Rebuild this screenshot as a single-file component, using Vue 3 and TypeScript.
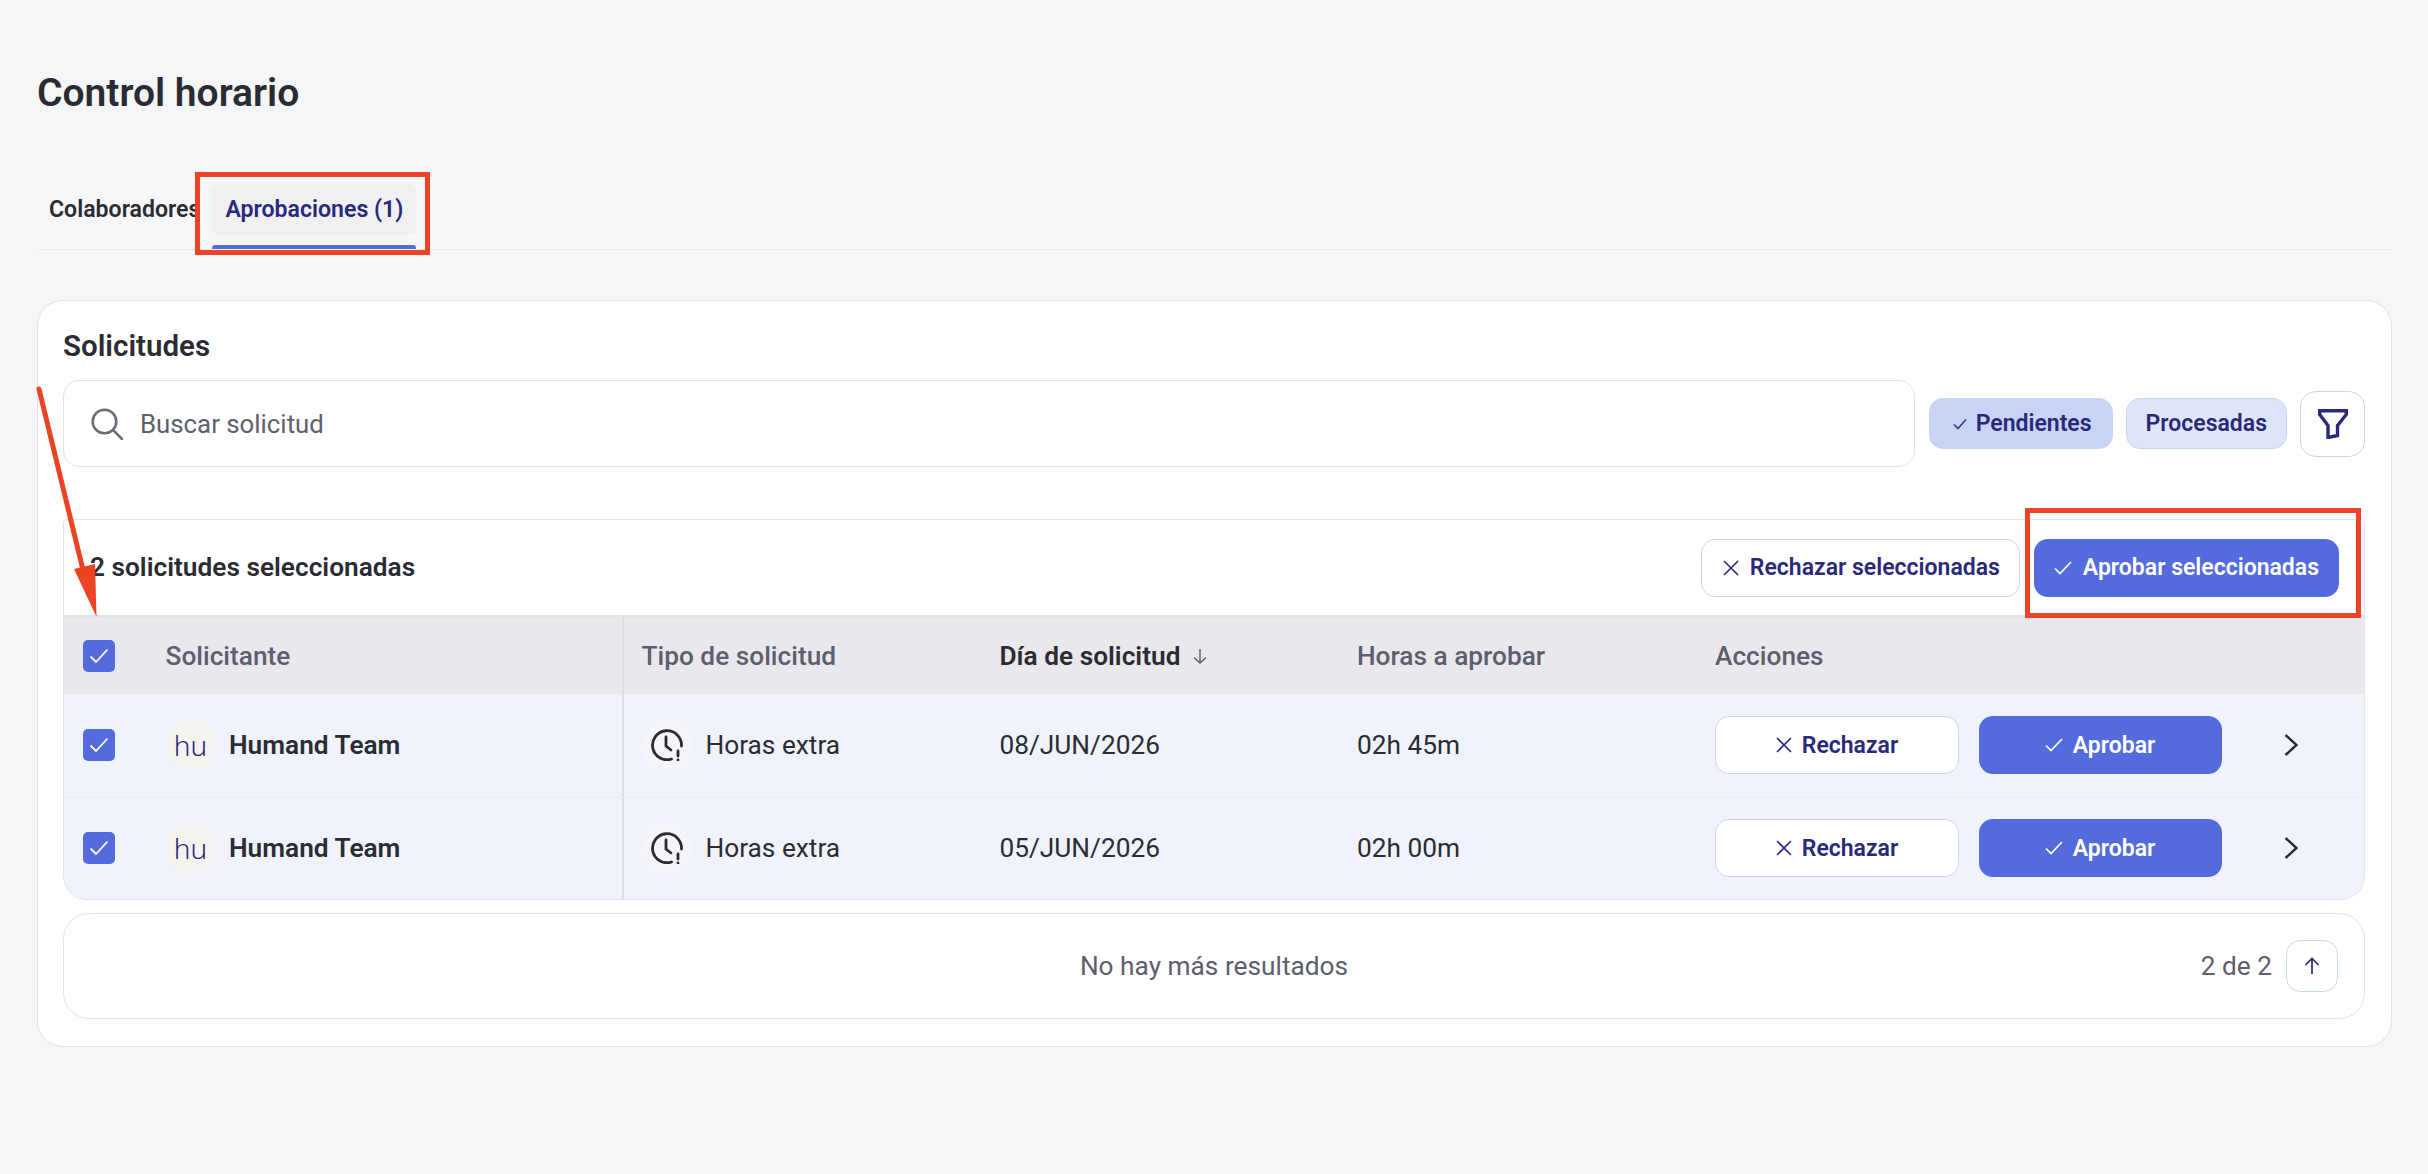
<template>
  <div class="page">
    <h1 class="title">Control horario</h1>

    <!-- tabs -->
    <div class="tabs">
      <div class="tab">Colaboradores</div>
      <div class="tab active">
        <span class="tab-label">Aprobaciones (1)</span>
        <span class="mark mark-tab"></span>
      </div>
    </div>

    <div class="card">
      <h2 class="card-title">Solicitudes</h2>

      <!-- buscador y filtros -->
      <div class="search-row">
        <div class="search">
          <svg class="search-icon" viewBox="0 0 32 32" fill="none" stroke="#6c6c78" stroke-width="2.6" stroke-linecap="round">
            <circle cx="13.5" cy="13.5" r="11.8" />
            <path d="M22.2 22.2 31 31" />
          </svg>
          <span class="placeholder">Buscar solicitud</span>
        </div>
        <div class="chip chip-on">
          <svg class="chip-check" viewBox="0 0 14 14" fill="none" stroke="#29297a" stroke-width="1.4"><path d="m1 7.5 4 4 8-9" /></svg>
          Pendientes
        </div>
        <div class="chip">Procesadas</div>
        <button class="filter-btn">
          <svg viewBox="0 0 30 30" width="30" height="30" fill="none" stroke="#29297a" stroke-width="3.4"><path d="M1.700 1.700h26.600v3.800L19.500 16.500v10l-9.500 2V16.500L1.700 5.500z" /></svg>
        </button>
      </div>

      <div class="table">
        <div class="toolbar">
          <span class="selected-count">2 solicitudes seleccionadas</span>
          <div class="toolbar-actions">
            <button class="btn btn-outline btn-wide">
              <svg class="ico-x" viewBox="0 0 16 16" fill="none" stroke="#29297a" stroke-width="1.6"><path d="m1 1 14 14M15 1 1 15" /></svg>
              Rechazar seleccionadas
            </button>
            <div class="approve-wrap">
              <button class="btn btn-primary btn-wide">
                <svg class="ico-check" viewBox="0 0 18 14" fill="none" stroke="#fff" stroke-width="1.7"><path d="m1 7.500 5 5L17 1" /></svg>
                Aprobar seleccionadas
              </button>
              <span class="mark mark-approve"></span>
            </div>
          </div>
        </div>

        <div class="grid-row head">
          <div class="cell"><span class="checkbox"><svg viewBox="0 0 20 16" fill="none" stroke="#fff" stroke-width="1.800"><path d="m1.500 8.500 5.500 5.500L18.500 1.500" /></svg></span></div>
          <div class="cell">Solicitante</div>
          <div class="cell pad divided">Tipo de solicitud</div>
          <div class="cell sorted">
            Día de solicitud
            <svg class="sort-arrow" viewBox="0 0 16 16" fill="none" stroke="#5e5e6e" stroke-width="1.400"><path d="M8 1v14M2 9.500 8 15l6-5.500" /></svg>
          </div>
          <div class="cell">Horas a aprobar</div>
          <div class="cell">Acciones</div>
        </div>

        <div v-for="item in solicitudes" :key="item.fecha" class="grid-row body">
          <div class="cell"><span class="checkbox"><svg viewBox="0 0 20 16" fill="none" stroke="#fff" stroke-width="1.800"><path d="m1.500 8.500 5.500 5.500L18.500 1.500" /></svg></span></div>
          <div class="cell person">
            <span class="avatar">hu</span>
            <span class="person-name">{{ item.nombre }}</span>
          </div>
          <div class="cell pad divided kind">
            <span class="kind-badge">
              <svg viewBox="0 0 32 32" width="32" height="32" fill="none" stroke="#2b2c33" stroke-width="2.800" stroke-linecap="round">
                <path d="M20.500 30A14.500 14.500 0 1 1 30.500 17" />
                <path d="M15 8v9l5 4" />
                <path d="M27 22v5" />
                <path d="M27 31v.1" />
              </svg>
            </span>
            {{ item.tipo }}
          </div>
          <div class="cell">{{ item.fecha }}</div>
          <div class="cell">{{ item.horas }}</div>
          <div class="cell actions">
            <button class="btn btn-outline btn-row btn-reject">
              <svg class="ico-x" viewBox="0 0 16 16" fill="none" stroke="#29297a" stroke-width="1.600"><path d="m1 1 14 14M15 1 1 15" /></svg>
              Rechazar
            </button>
            <button class="btn btn-primary btn-row">
              <svg class="ico-check" viewBox="0 0 18 14" fill="none" stroke="#fff" stroke-width="1.700"><path d="m1 7.500 5 5L17 1" /></svg>
              Aprobar
            </button>
            <svg class="chevron" viewBox="0 0 14 22" fill="none" stroke="#2b2c33" stroke-width="2.400"><path d="m1.500 1 11 10-11 10" /></svg>
          </div>
        </div>
      </div>

      <div class="footer">
        <span class="no-more">No hay más resultados</span>
        <div class="pager">
          <span>2 de 2</span>
          <button class="up-btn">
            <svg viewBox="0 0 16 18" width="16" height="18" fill="none" stroke="#29297a" stroke-width="1.700"><path d="M8 17V1.500M1.500 8 8 1.500 14.500 8" /></svg>
          </button>
        </div>
      </div>
    </div>

    <!-- flecha de anotación -->
    <svg class="arrow" viewBox="0 0 2428 1174" width="2428" height="1174">
      <path d="M39 389 83 570" stroke="#ed4325" stroke-width="5" stroke-linecap="round" />
      <path d="M74 569 95 564 96.500 617z" fill="#ed4325" />
    </svg>
  </div>
</template>

<script setup lang="ts">
interface Solicitud {
  nombre: string;
  tipo: string;
  fecha: string;
  horas: string;
}

const solicitudes: Solicitud[] = [
  { nombre: "Humand Team", tipo: "Horas extra", fecha: "08/JUN/2026", horas: "02h 45m" },
  { nombre: "Humand Team", tipo: "Horas extra", fecha: "05/JUN/2026", horas: "02h 00m" },
];
</script>

<style>
html,
body {
  margin: 0;
  background: #f5f6f8;
}
</style>

<style scoped>
.page {
  position: relative;
  box-sizing: border-box;
  height: 1174px;
  padding: 71px 36.500px 0 37px;
  background: #f5f6f8;
  color: #2b2c33;
  font-family: Roboto, "Liberation Sans", sans-serif;
  overflow: hidden;
}

.title {
  margin: 0;
  font-size: 39px;
  line-height: 44px;
  font-weight: 600;
}

.tabs {
  display: flex;
  margin-top: 69px;
  height: 65px;
  border-bottom: 1.500px solid #e9eaef;
}

.tab {
  position: relative;
  box-sizing: border-box;
  height: 51px;
  padding: 0 12px;
  display: flex;
  align-items: center;
  font-size: 23.100px;
  font-weight: 600;
}

.tab.active {
  padding: 0 13px;
  background: #f0f0f3;
  border-radius: 6px;
  color: #29297a;
}

.tab.active::after {
  content: "";
  position: absolute;
  left: 0;
  right: 0;
  top: 61px;
  height: 3.500px;
  background: #536bdc;
  border-radius: 3px 3px 0 0;
}

.mark {
  position: absolute;
  box-sizing: border-box;
  border: 5.500px solid #ed4325;
  z-index: 2;
}

.mark-tab {
  left: -17px;
  right: -14px;
  top: -12px;
  bottom: -20px;
}

.card {
  box-sizing: border-box;
  margin-top: 50px;
  height: 747px;
  padding: 28px 25.500px 27px 25px;
  background: #fff;
  border: 1.500px solid #e2e3ea;
  border-radius: 26px;
}

.card-title {
  margin: 0;
  font-size: 29.500px;
  line-height: 34px;
  font-weight: 600;
}

.search-row {
  display: flex;
  align-items: center;
  gap: 13.500px;
  margin-top: 17px;
}

.search {
  flex: 1;
  box-sizing: border-box;
  height: 87px;
  display: flex;
  align-items: center;
  gap: 17px;
  padding-left: 27px;
  border: 1.500px solid #e2e3ea;
  border-radius: 16px;
}

.search-icon {
  width: 32px;
  height: 32px;
}

.placeholder {
  font-size: 25.800px;
  color: #5e5e6e;
}

.chip {
  box-sizing: border-box;
  height: 51px;
  padding: 0 18.500px;
  display: flex;
  align-items: center;
  gap: 9px;
  background: #dfe5f8;
  border: 1.500px solid #c9d5f5;
  border-radius: 14px;
  color: #29297a;
  font-size: 23px;
  font-weight: 600;
}

.chip-on {
  padding: 0 20px 0 23px;
  background: #c7d4f5;
}

.chip-check {
  width: 14px;
  height: 14px;
}

.filter-btn {
  box-sizing: border-box;
  width: 65px;
  height: 66px;
  padding: 0;
  display: flex;
  align-items: center;
  justify-content: center;
  background: #fff;
  border: 1.500px solid #c9d5f5;
  border-radius: 16px;
}

.table {
  margin-top: 52px;
  border: 1.500px solid #e2e3ea;
  border-radius: 4px 4px 24px 24px;
}

.toolbar {
  box-sizing: border-box;
  height: 95px;
  padding: 0 25px 2px 26px;
  display: flex;
  align-items: center;
  justify-content: space-between;
  background: #fff;
  border-radius: 4px 4px 0 0;
}

.selected-count {
  font-size: 26.250px;
  font-weight: 600;
}

.toolbar-actions {
  display: flex;
  align-items: center;
  gap: 14px;
  margin-bottom: -2px;
}

.approve-wrap {
  position: relative;
  display: flex;
}

.mark-approve {
  left: -9px;
  right: -22px;
  top: -31px;
  bottom: -21px;
}

.btn {
  box-sizing: border-box;
  height: 58px;
  display: flex;
  align-items: center;
  justify-content: center;
  font-family: inherit;
  font-size: 23px;
  font-weight: 600;
  border-radius: 14px;
  padding: 0;
}

.btn-wide {
  padding: 0 20px;
  gap: 11px;
}

.btn-outline.btn-wide {
  padding: 0 19px 0 21px;
  gap: 11px;
}

.btn-row {
  width: 243px;
  gap: 10px;
}

.btn-reject {
  width: 244px;
  margin-right: -0.500px;
}

.btn-outline {
  background: #fff;
  border: 1.500px solid #c9d5f5;
  color: #29297a;
}

.btn-primary {
  background: #536bdc;
  border: 0;
  color: #fff;
}

.ico-x {
  width: 16px;
  height: 16px;
}

.ico-check {
  width: 18px;
  height: 14px;
}

.grid-row {
  display: grid;
  grid-template-columns: 101.500px 456.500px 377.500px 357.500px 358px 1fr;
}

.cell {
  display: flex;
  align-items: center;
  min-width: 0;
}

.cell:first-child {
  padding-left: 19px;
}

.head {
  height: 79px;
  background: #e8e8ed;
  border-top: 2px solid #e2e3ea;
  box-sizing: border-box;
  color: #5e5e6e;
  font-size: 26.250px;
  font-weight: 500;
}

.sorted {
  color: #2b2c33;
  font-weight: 600;
  gap: 12px;
}

.sort-arrow {
  width: 16px;
  height: 16px;
}

.pad {
  padding-left: 17.500px;
}

.divided {
  border-left: 2px solid #dcdde5;
}

.body {
  box-sizing: border-box;
  height: 102.500px;
  background: #f0f3fb;
  font-size: 26.250px;
}

.body + .body {
  border-top: 1.500px solid #e8ebf3;
}

.body:last-child {
  border-radius: 0 0 23px 23px;
}

.checkbox {
  box-sizing: border-box;
  width: 32px;
  height: 32px;
  display: flex;
  align-items: center;
  justify-content: center;
  background: #536bdc;
  border-radius: 5px;
}

.checkbox svg {
  width: 20px;
  height: 16px;
}

.person {
  gap: 13.500px;
}

.avatar {
  width: 50px;
  height: 51px;
  display: flex;
  align-items: center;
  justify-content: center;
  background: #f5f3ee;
  border-radius: 50%;
  color: #29297a;
  font-family: "Noto Sans", sans-serif;
  font-size: 28px;
  font-weight: 300;
}

.person-name {
  font-size: 26.250px;
  font-weight: 600;
}

.kind {
  gap: 14px;
}

.kind-badge {
  width: 50px;
  height: 51px;
  display: flex;
  align-items: center;
  justify-content: center;
  background: #f4f5f9;
  border-radius: 50%;
}

.actions {
  gap: 20px;
}

.chevron {
  width: 14px;
  height: 22px;
  margin-left: 42px;
}

.footer {
  position: relative;
  box-sizing: border-box;
  height: 105.500px;
  margin-top: 13px;
  display: flex;
  align-items: center;
  justify-content: center;
  border: 1.500px solid #e2e3ea;
  border-radius: 26px;
}

.no-more {
  font-size: 26.250px;
  color: #5e5e6e;
}

.pager {
  position: absolute;
  right: 26px;
  top: 50%;
  transform: translateY(-50%);
  display: flex;
  align-items: center;
  gap: 14px;
  font-size: 26.250px;
  color: #5e5e6e;
}

.up-btn {
  box-sizing: border-box;
  width: 52px;
  height: 52px;
  padding: 0;
  display: flex;
  align-items: center;
  justify-content: center;
  background: #fff;
  border: 1.500px solid #c9d5f5;
  border-radius: 14px;
}

.arrow {
  position: absolute;
  left: 0;
  top: 0;
  pointer-events: none;
}
</style>
